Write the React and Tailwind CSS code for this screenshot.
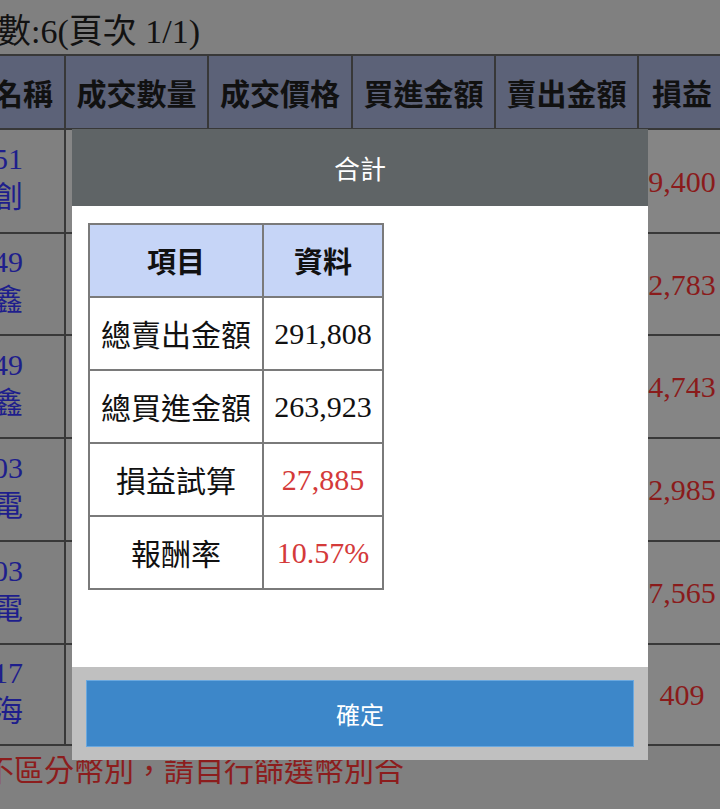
import React from "react";

const rows = [
  { code: "3551", name: "達創", pl: "9,400", h: "h-[104px]" },
  { code: "3349", name: "寶鑫", pl: "2,783", h: "h-[102px]" },
  { code: "3349", name: "寶鑫", pl: "4,743", h: "h-[103px]" },
  { code: "2303", name: "聯電", pl: "2,985", h: "h-[103px]" },
  { code: "2303", name: "聯電", pl: "7,565", h: "h-[103px]" },
  { code: "2317", name: "鴻海", pl: "409", h: "h-[101px]" },
];

const serif = { fontFamily: '"Liberation Serif", "Noto Sans CJK TC", serif' };
const sans = { fontFamily: '"Noto Sans CJK TC", "Noto Sans", sans-serif' };

export default function App() {
  return (
    <div className="relative w-[720px] h-[809px] overflow-hidden bg-[#808080]" style={serif}>
      <div className="h-[54px] ml-[-37px] text-[34px] leading-[64px] text-[#121212] whitespace-nowrap">
        筆數:6(頁次 1/1)
      </div>

      <table className="ml-[-80px] border-collapse table-fixed w-[805px]">
        <colgroup>
          <col className="w-[144px]" />
          <col className="w-[143px]" />
          <col className="w-[144px]" />
          <col className="w-[143px]" />
          <col className="w-[143px]" />
          <col className="w-[88px]" />
        </colgroup>
        <thead>
          <tr className="bg-[#5c6278]" style={sans}>
            {["股票名稱", "成交數量", "成交價格", "買進金額", "賣出金額", "損益"].map((h) => (
              <th
                key={h}
                className="h-[74px] p-0 border-2 border-[#383838] text-[30px] font-bold text-[#111] whitespace-nowrap text-center"
              >
                {h}
              </th>
            ))}
          </tr>
        </thead>
        <tbody>
          {rows.map((r, i) => (
            <tr key={i}>
              <td className={r.h + " p-0 border-2 border-[#383838] text-center text-[30px] leading-[38px] text-[#1e1e8c]"}>
                <div className="-mt-[6px]">{r.code}</div>
                <div>{r.name}</div>
              </td>
              <td className="p-0 border-2 border-[#383838] bg-[#868686]"></td>
              <td className="p-0 border-2 border-[#383838] bg-[#868686]"></td>
              <td className="p-0 border-2 border-[#383838] bg-[#868686]"></td>
              <td className="p-0 border-2 border-[#383838] bg-[#868686]"></td>
              <td className="p-0 border-2 border-[#383838] bg-[#858585] text-center text-[30px] text-[#8a1b1b] whitespace-nowrap">
                {r.pl}
              </td>
            </tr>
          ))}
        </tbody>
      </table>

      <div className="ml-[-76px] mt-[2px] text-[30px] leading-[40px] text-[#8c1d1d] whitespace-nowrap" style={sans}>
        本表不區分幣別，請自行篩選幣別合
      </div>

      {/* Modal dialog */}
      <div className="absolute left-[72px] top-[129px] w-[576px] h-[631px] flex flex-col" style={sans}>
        <div className="h-[77px] bg-[#5f6466] flex items-center justify-center text-white text-[26px]">
          合計
        </div>
        <div className="flex-1 bg-white pt-[17px] pl-[16px]">
          <table className="border-collapse table-fixed w-[294px]" style={serif}>
            <colgroup>
              <col className="w-[174px]" />
              <col className="w-[120px]" />
            </colgroup>
            <thead>
              <tr className="bg-[#c6d5f7]" style={sans}>
                <th className="h-[73px] p-0 border-2 border-[#7a7a7a] text-[29px] font-bold text-[#111] text-center">項目</th>
                <th className="h-[73px] p-0 border-2 border-[#7a7a7a] text-[29px] font-bold text-[#111] text-center">資料</th>
              </tr>
            </thead>
            <tbody>
              {[
                ["總賣出金額", "291,808", false],
                ["總買進金額", "263,923", false],
                ["損益試算", "27,885", true],
                ["報酬率", "10.57%", true],
              ].map(([k, v, red]) => (
                <tr key={k}>
                  <td className="h-[73px] p-0 border-2 border-[#7a7a7a] text-center text-[30px] text-[#111] whitespace-nowrap" style={sans}>
                    {k}
                  </td>
                  <td
                    className={
                      red
                        ? "h-[73px] p-0 border-2 border-[#7a7a7a] text-center text-[30px] text-[#d43a3a] whitespace-nowrap"
                        : "h-[73px] p-0 border-2 border-[#7a7a7a] text-center text-[30px] text-[#111] whitespace-nowrap"
                    }
                  >
                    {v}
                  </td>
                </tr>
              ))}
            </tbody>
          </table>
        </div>
        <div className="h-[93px] bg-[#c0c0c0] px-[14px] py-[13px]">
          <button className="w-full h-full bg-[#3d87c9] border border-[#6aa8df] text-white text-[24px]">
            確定
          </button>
        </div>
      </div>
    </div>
  );
}
